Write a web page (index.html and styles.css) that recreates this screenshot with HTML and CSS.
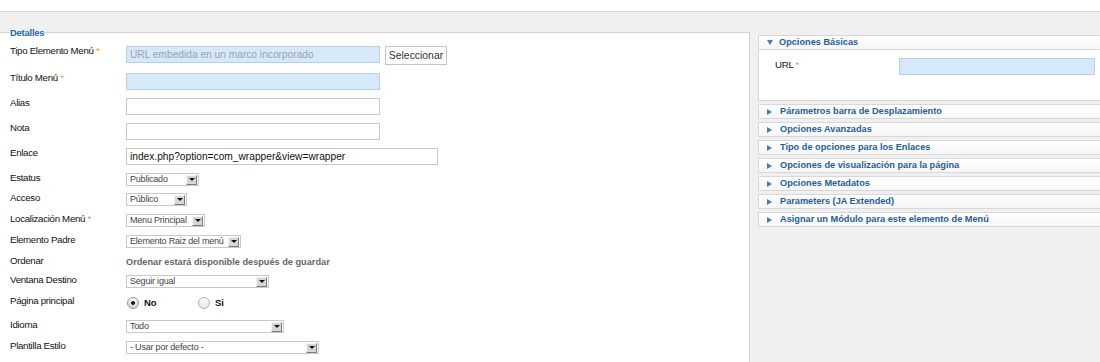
FILE: index.html
```html
<!DOCTYPE html>
<html lang="es">
<head>
    <meta charset="UTF-8">
    <title>Elemento de menú</title>
    <link rel="stylesheet" href="styles.css">
</head>
<body>
    <div class="top"></div>

    <div class="main">
        <!-- Detalles -->
        <fieldset class="details">
            <legend>Detalles</legend>

            <div class="row">
                <label class="lbl">Tipo Elemento Menú <span class="req">*</span></label>
                <input class="field blue" type="text" placeholder="URL embedida en un marco incorporado" readonly>
                <button class="btn">Seleccionar</button>
            </div>
            <div class="row">
                <label class="lbl">Título Menú <span class="req">*</span></label>
                <input class="field blue" type="text">
            </div>
            <div class="row">
                <label class="lbl">Alias</label>
                <input class="field" type="text">
            </div>
            <div class="row">
                <label class="lbl">Nota</label>
                <input class="field" type="text">
            </div>
            <div class="row">
                <label class="lbl">Enlace</label>
                <input class="field wide" type="text" value="index.php?option=com_wrapper&amp;view=wrapper" readonly>
            </div>
            <div class="row sel-row">
                <label class="lbl">Estatus</label>
                <div class="select" style="width:73px"><span class="val">Publicado</span><span class="arrow"></span></div>
            </div>
            <div class="row">
                <label class="lbl">Acceso</label>
                <div class="select" style="width:61px"><span class="val">Público</span><span class="arrow"></span></div>
            </div>
            <div class="row">
                <label class="lbl">Localización Menú <span class="req">*</span></label>
                <div class="select" style="width:79px"><span class="val">Menu Principal</span><span class="arrow"></span></div>
            </div>
            <div class="row">
                <label class="lbl">Elemento Padre</label>
                <div class="select" style="width:115px"><span class="val">Elemento Raiz del menú</span><span class="arrow"></span></div>
            </div>
            <div class="row note-row">
                <label class="lbl">Ordenar</label>
                <span class="note">Ordenar estará disponible después de guardar</span>
            </div>
            <div class="row">
                <label class="lbl">Ventana Destino</label>
                <div class="select" style="width:143px"><span class="val">Seguir igual</span><span class="arrow"></span></div>
            </div>
            <div class="row radio-row">
                <label class="lbl">Página principal</label>
                <div class="radios">
                    <input type="radio" name="home" id="home0" checked>
                    <label for="home0">No</label>
                    <input type="radio" name="home" id="home1">
                    <label for="home1">Si</label>
                </div>
            </div>
            <div class="row">
                <label class="lbl">Idioma</label>
                <div class="select" style="width:158px"><span class="val">Todo</span><span class="arrow"></span></div>
            </div>
            <div class="row">
                <label class="lbl">Plantilla Estilo</label>
                <div class="select" style="width:193px"><span class="val">- Usar por defecto -</span><span class="arrow"></span></div>
            </div>
        </fieldset>

        <!-- Opciones -->
        <div class="options">
            <div class="panel-head open"><span class="tri"></span>Opciones Básicas</div>
            <div class="panel-body">
                <div class="url-row">
                    <label class="url-lbl">URL <span class="req">*</span></label>
                    <input class="field blue url" type="text">
                </div>
            </div>
            <div class="panel-head"><span class="tri"></span>Párametros barra de Desplazamiento</div>
            <div class="panel-head"><span class="tri"></span>Opciones Avanzadas</div>
            <div class="panel-head"><span class="tri"></span>Tipo de opciones para los Enlaces</div>
            <div class="panel-head"><span class="tri"></span>Opciones de visualización para la página</div>
            <div class="panel-head"><span class="tri"></span>Opciones Metadatos</div>
            <div class="panel-head"><span class="tri"></span>Parameters (JA Extended)</div>
            <div class="panel-head"><span class="tri"></span>Asignar un Módulo para este elemento de Menú</div>
        </div>
    </div>
</body>
</html>
```

FILE: styles.css
```css
body {
    margin: 0;
    font-family: "Liberation Sans", Arial, sans-serif;
    font-size: 9.2px;
    color: #111;
    background-color: #fff;
    overflow: hidden;
}

.top {
    height: 11px;
    background-color: #fff;
}

.main {
    display: flex;
    align-items: flex-start;
    background-color: #f0f0f0;
    border-top: 1px solid #d6d6d6;
    padding-top: 14px;
    height: 340px;
    overflow: hidden;
}

/* Detalles fieldset */
.details {
    box-sizing: border-box;
    flex: none;
    width: 750px;
    min-height: 340px;
    margin: 0;
    padding: 7px 0 0 10px;
    border: 1px solid #d2d2d2;
    border-left: none;
    background-color: #fff;
}

.details legend {
    padding: 0;
    font-weight: bold;
    font-size: 9.4px;
    letter-spacing: -0.2px;
    line-height: 13px;
    color: #2466a2;
}

.row {
    display: flex;
    align-items: flex-start;
    margin-bottom: 8px;
}

.sel-row {
    margin-bottom: 7px;
}

.note-row {
    margin-bottom: 6px;
}

.radio-row {
    margin-bottom: 11px;
}

.lbl {
    flex: none;
    width: 116px;
    font-size: 9.7px;
    letter-spacing: -0.3px;
    line-height: 10px;
}

.req {
    color: #f0911c;
}

.field {
    box-sizing: border-box;
    width: 254px;
    height: 17px;
    margin: 0;
    padding: 0 3px;
    border: 1px solid #c9c9c9;
    background-color: #fff;
    font-family: "Liberation Sans", Arial, sans-serif;
    font-size: 10.2px;
    color: #111;
    outline: none;
}

.field.blue {
    background-color: #d5e9fb;
    border-color: #bccfdf;
}

.field::placeholder {
    color: #9aa3ab;
}

.field.wide {
    width: 312px;
}

.btn {
    box-sizing: border-box;
    height: 19px;
    width: 62px;
    margin-left: 5px;
    padding: 0;
    border: 1px solid #c6c6c6;
    background-color: #fff;
    font-family: "Liberation Sans", Arial, sans-serif;
    font-size: 10.4px;
    color: #333;
}

/* old style dropdowns */
.select {
    box-sizing: border-box;
    display: flex;
    align-items: center;
    justify-content: space-between;
    height: 13px;
    border: 1px solid #c9c9c9;
    background-color: #fff;
}

.select .val {
    padding-left: 3px;
    font-size: 9px;
    letter-spacing: -0.2px;
    line-height: 11px;
    color: #444;
    white-space: nowrap;
    overflow: hidden;
}

.select .arrow {
    box-sizing: border-box;
    flex: none;
    display: flex;
    align-items: center;
    justify-content: center;
    width: 11px;
    height: 10px;
    margin-right: 1px;
    background-color: #d6d6d6;
    border-top: 1px solid #f4f4f4;
    border-left: 1px solid #f4f4f4;
    border-right: 1px solid #7a7a7a;
    border-bottom: 1px solid #7a7a7a;
}

.select .arrow::after {
    content: "";
    width: 0;
    height: 0;
    border-top: 3px solid #111;
    border-left: 3px solid transparent;
    border-right: 3px solid transparent;
}

.note {
    font-weight: bold;
    color: #666;
    line-height: 13px;
}

.radios {
    display: flex;
    align-items: center;
    height: 13px;
}

.radios input {
    appearance: none;
    -webkit-appearance: none;
    box-sizing: border-box;
    width: 12px;
    height: 12px;
    margin: 0 0 0 1px;
    border: 1px solid #b0b0b0;
    border-radius: 50%;
    background: linear-gradient(#fff, #e6e6e6);
}

.radios input:checked {
    background: radial-gradient(circle, #222 0, #222 1.6px, transparent 2.2px), linear-gradient(#f4f7fa, #c9d5e1);
    border-color: #8a96a2;
}

.radios label {
    margin-left: 5px;
    font-weight: bold;
    font-size: 9.5px;
    line-height: 13px;
    width: 53px;
}

/* Options panels */
.options {
    flex: none;
    width: 345px;
    margin: 9px 0 0 8px;
}

.panel-head {
    display: flex;
    align-items: center;
    padding-left: 8px;
    margin-bottom: 3px;
    border: 1px solid #d8d8d8;
    background: linear-gradient(#fff, #f6f6f6);
    line-height: 13px;
    font-weight: bold;
    color: #1f5f99;
}

.panel-head .tri {
    width: 0;
    height: 0;
    margin-right: 8px;
    border-left: 5px solid #3a7fbd;
    border-top: 3.5px solid transparent;
    border-bottom: 3.5px solid transparent;
}

.panel-head.open {
    margin-bottom: 0;
}

.panel-head.open .tri {
    margin-right: 6px;
    border-top: 5px solid #3a7fbd;
    border-left: 3.5px solid transparent;
    border-right: 3.5px solid transparent;
    border-bottom: none;
}

.panel-body {
    box-sizing: border-box;
    height: 51px;
    margin-bottom: 3px;
    padding: 8px 0 0 16px;
    border: 1px solid #d8d8d8;
    border-top: none;
    background-color: #fff;
}

.url-row {
    display: flex;
    align-items: flex-start;
}

.url-lbl {
    width: 124px;
    font-size: 9.7px;
    letter-spacing: -0.3px;
    line-height: 13px;
}

.field.url {
    width: 196px;
}
```
